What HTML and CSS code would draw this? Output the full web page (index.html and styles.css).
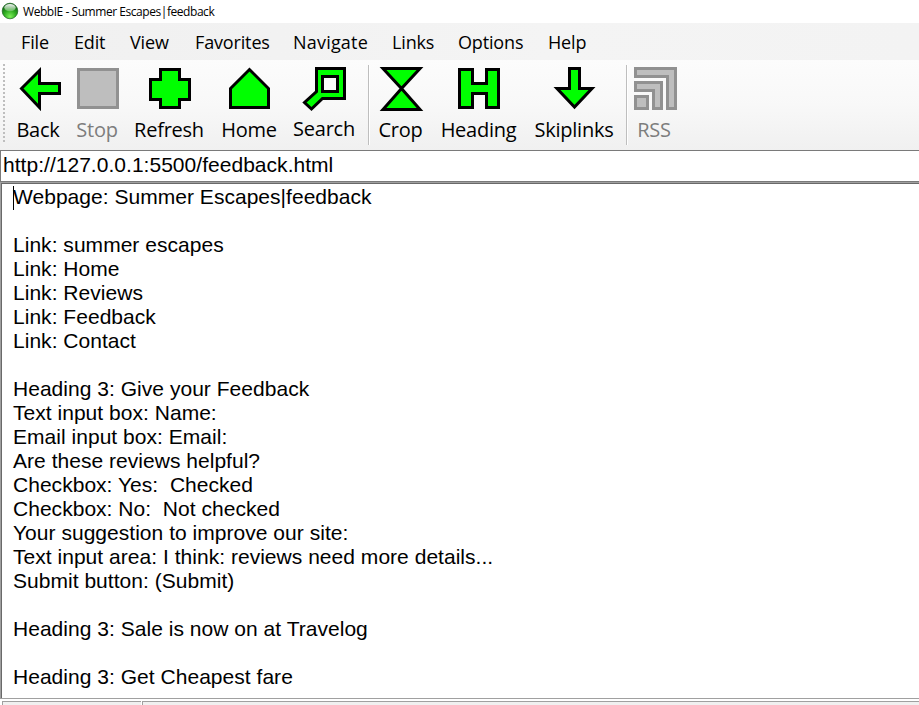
FILE: index.html
```html
<!DOCTYPE html>
<html lang="en">
<head>
<meta charset="utf-8">
<title>WebbIE - Summer Escapes|feedback</title>
<link rel="stylesheet" href="styles.css">
</head>
<body>
<header class="titlebar">
  <svg class="logo" width="18" height="18" viewBox="0 0 18 18">
    <defs>
      <radialGradient id="orb" cx=".5" cy=".85" r=".8"><stop offset="0" stop-color="#7df05a"/><stop offset=".5" stop-color="#2eab20"/><stop offset="1" stop-color="#0b5a12"/></radialGradient>
      <linearGradient id="shine" x2="0" y2="1"><stop offset="0" stop-color="#fff" stop-opacity=".95"/><stop offset="1" stop-color="#fff" stop-opacity=".25"/></linearGradient>
    </defs>
    <circle cx="9" cy="9" r="7.8" fill="url(#orb)" stroke="#17641b" stroke-width=".7"/>
    <ellipse cx="9" cy="5.6" rx="5.7" ry="3.7" fill="url(#shine)"/>
  </svg>
  <span class="title">WebbIE - Summer Escapes|feedback</span>
</header>
<nav class="menu">
  <span>File</span><span>Edit</span><span>View</span><span>Favorites</span><span class="wide">Navigate</span><span>Links</span><span>Options</span><span>Help</span>
</nav>
<div class="toolbar">
  <div class="grip"></div>
  <div class="tool back"><svg class="icon" width="48" height="48" viewBox="0 0 48 48"><path d="M5.500 24.500 23.500 6.500V19.500H43.500V29.500H23.500V43.500Z"/></svg><span>Back</span></div>
  <div class="tool stop off"><svg class="icon" width="48" height="48" viewBox="0 0 48 48"><path d="M4.500 5.500H43.500V43.500H4.500Z"/></svg><span>Stop</span></div>
  <div class="tool refresh"><svg class="icon" width="48" height="48" viewBox="0 0 48 48"><path d="M14.500 5.500H33.500V15.500H43.500V35.500H33.500V43.500H14.500V35.500H4.500V15.500H14.500Z"/></svg><span>Refresh</span></div>
  <div class="tool home"><svg class="icon" width="48" height="48" viewBox="0 0 48 48"><path d="M5.500 24.500 24.500 5.500 43.500 24.500V43.500H5.500Z"/></svg><span>Home</span></div>
  <div class="tool search"><svg class="icon" width="48" height="48" viewBox="0 0 48 48"><path d="M16.500 4.500H44.500V34.500H22.500L11.500 45 4.500 38.500 16.500 27.500Z"/><path class="hole" d="M22.500 12.500H37.500V27.500H22.500Z"/></svg><span>Search</span></div>
  <div class="rule"></div>
  <div class="tool crop"><svg class="icon" width="48" height="48" viewBox="0 0 48 48"><path d="M6 4.500H43L24.500 24.500Z M24.500 24.500 43 45.500H6Z"/></svg><span>Crop</span></div>
  <div class="tool heading"><svg class="icon" width="48" height="48" viewBox="0 0 48 48"><path d="M4.500 5.500H17.500V19.500H31.500V5.500H43.500V43.500H31.500V29.500H17.500V43.500H4.500Z"/></svg><span>Heading</span></div>
  <div class="tool skip"><svg class="icon" width="48" height="48" viewBox="0 0 48 48"><path d="M19.500 4.500H29.500V24.500H42L24.500 43 7 24.500H19.500Z"/></svg><span>Skiplinks</span></div>
  <div class="rule"></div>
  <div class="tool rss off"><svg class="icon" width="48" height="48" viewBox="0 0 48 48"><path d="M3.500 4.500H43.500V44.500H35.500V12.500H3.500Z M3.500 18.500H29.500V44.500H21.500V26.500H3.500Z M3.500 32.500H15.500V44.500H3.500Z"/></svg><span>RSS</span></div>
</div>
<div class="address">http://127.0.0.1:5500/feedback.html</div>
<main class="page"><i class="caret"></i>Webpage: Summer Escapes|feedback

Link: summer escapes
Link: Home
Link: Reviews
Link: Feedback
Link: Contact

Heading 3: Give your Feedback
Text input box: Name:
Email input box: Email:
Are these reviews helpful?
Checkbox: Yes:  Checked
Checkbox: No:  Not checked
Your suggestion to improve our site:
Text input area: I think: reviews need more details...
Submit button: (Submit)

Heading 3: Sale is now on at Travelog

Heading 3: Get Cheapest fare</main>
<footer class="status"><div></div><div></div></footer>
</body>
</html>
```
FILE: styles.css
```css
* { box-sizing: border-box; }
body {
  margin: 0;
  height: 705px;
  overflow: hidden;
  display: flex;
  flex-direction: column;
  background: #fff;
  color: #000;
  font-family: "Open Sans", "Noto Sans", sans-serif;
}
.titlebar { height: 23px; flex: none; display: flex; align-items: center; padding-left: 1px; }
.logo { margin-top: -1px; }
.title { margin-left: 4px; font-size: 12px; letter-spacing: -0.45px; white-space: nowrap; line-height: 24px; }
.menu {
  height: 37px;
  flex: none;
  display: grid;
  grid-template-columns: 53px 56px 65px 98px 99px 66px 90px 60px;
  padding-left: 21px;
  background: linear-gradient(90deg, #f0f0f0, #f4f4f4 60%, #f3f3f3);
  font-size: 18px;
  line-height: 39px;
  letter-spacing: -0.15px;
}
.menu .wide { letter-spacing: 0.2px; }
.toolbar {
  height: 90px;
  flex: none;
  display: flex;
  background: linear-gradient(#fcfcfc, #f8f8f8 50%, #f0f0f0);
}
.grip { width: 2px; height: 78px; margin: 4px 0 0 3px; background: repeating-linear-gradient(#bebebe 0 2px, transparent 2px 4px); }
.tool { display: flex; flex-direction: column; align-items: center; padding-top: 4px; white-space: nowrap; }
.tool span { font-size: 20px; line-height: 28px; margin-top: 4px; letter-spacing: -0.25px; }
.icon { display: block; fill: #0f0; stroke: #000; stroke-width: 3; flex: none; }
.icon .hole { fill: #f9f9f9; }
.off { color: #7d7d7d; }
.off .icon { fill: #bebebe; stroke: #919191; }
.back { width: 66px; }
.back .icon { margin-left: 4px; }
.stop { width: 52px; }
.stop .icon { margin-left: 2px; }
.refresh { width: 92px; }
.refresh .icon { margin-left: 2px; }
.home { width: 68px; }
.search { width: 82px; margin-right: 3px; }
.search span { margin-top: 3px; }
.rule { width: 2px; height: 80px; margin-top: 5px; background: #bebebe; border-right: 1px solid #fff; }
.crop { width: 61px; }
.crop .icon { margin-left: 1px; }
.heading { width: 95px; }
.skip { width: 96px; margin-right: 4px; }
.rss { width: 52px; }
.rss .icon { margin-left: 4px; }
.address {
  height: 32px;
  flex: none;
  border: solid #7a7a7a;
  border-width: 1px 0 1px 1px;
  padding-left: 2px;
  font: 21px/28px "Liberation Sans", sans-serif;
  letter-spacing: 0.03px;
}
.page {
  position: relative;
  flex: 1;
  padding: 1px 0 0 11px;
  border: solid #696969;
  border-width: 1px 0 0 1px;
  outline: 1px solid #a0a0a0;
  margin: 1px 0 0 1px;
  white-space: pre;
  font: 21px/24px "Liberation Sans", sans-serif;
  letter-spacing: 0.03px;
}
.caret { position: absolute; left: 11px; top: 2px; width: 1px; height: 24px; background: #000; }
.status { height: 7px; flex: none; display: grid; grid-template-columns: 139px 1fr; gap: 1px; padding: 2px 0 0 2px; border-top: 1px solid #e3e3e3; background: #fff; }
.status div { background: #f0f0f0; border: solid #a0a0a0; border-width: 1px 0 0 1px; }
```
